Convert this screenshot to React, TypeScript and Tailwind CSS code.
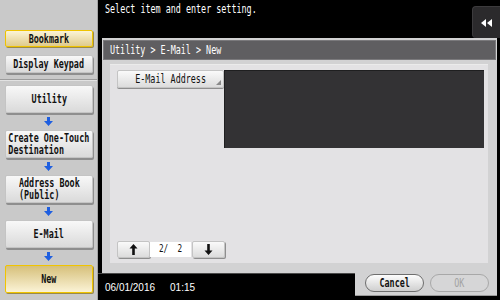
import React from "react";

const mono = "font-['DejaVu_Sans_Mono','Liberation_Mono',monospace]";

function L({ children, className = "" }: { children: React.ReactNode; className?: string }) {
  return <span className={`inline-block scale-x-[0.7] whitespace-pre ${className}`}>{children}</span>;
}

function Arrow() {
  return (
    <div className="h-[17px] flex items-center justify-center">
      <svg width="9" height="9" viewBox="0 0 9 9">
        <path d="M3 0h3v4h3L4.5 9 0 4h3z" fill="#1f5fe0" />
      </svg>
    </div>
  );
}

function SideBtn({ children, yellow = false, pressed = false, h = "h-[28px]" }: { children: React.ReactNode; yellow?: boolean; pressed?: boolean; h?: string }) {
  const base = `${h} w-[88px] rounded-[2px] flex items-center justify-center text-[12px] leading-[12px] font-bold text-[#111]`;
  const style = yellow
    ? pressed
      ? "border border-[#f0c400] bg-linear-to-b from-[#d6c07a] to-[#fbf3d6] shadow-[1px_1px_0_#9a8a4a]"
      : "border border-[#efc300] bg-linear-to-b from-[#fbf4d6] to-[#dfcb8c] shadow-[1px_1px_0_#9a8a4a]"
    : "border border-[#c4c4c4] bg-linear-to-b from-[#f8f8f8] to-[#dadada] shadow-[1px_2px_0_#8e8e8e]";
  return <div className={`${base} ${style}`}>{children}</div>;
}

export default function App() {
  return (
    <div className={`w-[500px] h-[300px] flex bg-black overflow-hidden ${mono}`}>
      {/* Sidebar */}
      <div className="w-[98px] h-full bg-[#c9c9c9] border-r border-[#a4a4a4] flex flex-col">
        <div className="pt-[30px] px-[5px] flex flex-col gap-[8px] pb-[6px]">
          <SideBtn yellow h="h-[17px]"><L>Bookmark</L></SideBtn>
          <SideBtn h="h-[18px]"><L>Display Keypad</L></SideBtn>
        </div>
        <div className="border-t border-[#9c9c9c] h-0" />
        <div className="border-t border-[#e2e2e2] h-0" />
        <div className="pt-[4px] px-[5px] flex flex-col">
          <SideBtn><L>Utility</L></SideBtn>
          <Arrow />
          <SideBtn>
            <L className="text-left">{"Create One-Touch\nDestination"}</L>
          </SideBtn>
          <Arrow />
          <SideBtn>
            <L className="text-left">{"Address Book\n(Public)"}</L>
          </SideBtn>
          <Arrow />
          <SideBtn><L>E-Mail</L></SideBtn>
          <Arrow />
          <SideBtn yellow pressed><L>New</L></SideBtn>
        </div>
      </div>

      {/* Right column */}
      <div className="flex-1 h-full flex flex-col">
        <div className="h-[38px] flex items-start">
          <div className="pt-[2px] pl-[7px] text-white text-[12px] leading-[15px]">
            <L className="origin-left">Select item and enter setting.</L>
          </div>
          <div className="ml-auto mt-[6px] w-[28px] h-[32px] rounded-l-[4px] bg-[#2b2a2c] border-l border-t border-[#3c3b3d] flex items-center justify-center">
            <svg width="11" height="8" viewBox="0 0 11 8">
              <polygon points="5,0 5,8 0,4" fill="white" />
              <polygon points="11,0 11,8 6,4" fill="white" />
            </svg>
          </div>
        </div>

        <div className="flex-1 ml-[4px] mr-[3px] bg-[#d2d2d3] flex flex-col pt-[2px] px-[1px]">
          <div className="h-[20px] bg-[#5f5e61] border border-[#7a797c] flex items-center pl-[6px] text-white text-[12px]">
            <L className="origin-left">Utility &gt; E-Mail &gt; New</L>
          </div>
          <div className="flex-1 flex flex-col pt-[4px] pb-[10px] pl-[7px] pr-[8px]">
            <div className="flex-1 bg-[#e3e2e4] border-t border-[#ebebeb] flex flex-col pl-[7px] pr-[3px] pt-[5px] pb-[5px]">
              <div className="flex items-start">
                <div className="relative w-[107px] h-[18px] rounded-[2px] border border-[#c4c4c4] bg-linear-to-b from-[#fafafa] to-[#dcdcdc] shadow-[0_1px_0_#8e8e8e] flex items-center justify-center text-[12px] text-[#111]">
                  <L>E-Mail Address</L>
                  <svg className="absolute right-[2px] bottom-[2px]" width="5" height="5" viewBox="0 0 5 5">
                    <polygon points="5,0 5,5 0,5" fill="#8a8a8a" />
                  </svg>
                </div>
                <div className="w-[260px] h-[78px] bg-[#333234] border-t border-l border-[#1f1f20]" />
              </div>
              <div className="flex-1" />
              <div className="flex items-center">
                <div className="w-[33px] h-[17px] rounded-[2px] border border-[#c4c4c4] bg-linear-to-b from-[#fafafa] to-[#dcdcdc] shadow-[1px_1px_0_#8e8e8e] flex items-center justify-center">
                  <svg width="9" height="11" viewBox="0 0 9 11">
                    <path d="M3.2 11V4.5H0.5L4.5 0 8.5 4.5H5.8V11z" fill="#111" />
                  </svg>
                </div>
                <div className="w-[41px] h-[15px] bg-white flex items-center justify-center text-[11px] text-[#111]">
                  <L>{"2/  2"}</L>
                </div>
                <div className="ml-[1px] w-[33px] h-[17px] rounded-[2px] border border-[#c4c4c4] bg-linear-to-b from-[#fafafa] to-[#dcdcdc] shadow-[1px_1px_0_#8e8e8e] flex items-center justify-center">
                  <svg width="9" height="11" viewBox="0 0 9 11">
                    <path d="M3.2 0V6.5H0.5L4.5 11 8.5 6.5H5.8V0z" fill="#111" />
                  </svg>
                </div>
              </div>
            </div>
          </div>
        </div>

        <div className="h-[27px] flex">
          <div className="w-[257px] bg-black border-t border-[#4a4a4a] flex items-center gap-[15px] pl-[7px] text-white text-[10px] font-['Liberation_Sans',Arial,sans-serif]">
            <span>06/01/2016</span>
            <span>01:15</span>
          </div>
          <div className="flex-1 mr-[3px] mb-[4px] bg-[#d2d2d3] border-b border-[#9a9a9a] flex items-start pt-[1px] pl-[10px] gap-[6px]">
            <div className="w-[59px] h-[18px] rounded-full border border-[#6e6e6e] bg-linear-to-b from-[#fdfdfd] to-[#cfcfcf] flex items-center justify-center text-[12px] font-bold text-[#111]">
              <L>Cancel</L>
            </div>
            <div className="w-[59px] h-[18px] rounded-full border border-[#a8a8a8] bg-[#d6d6d7] flex items-center justify-center text-[12px] text-[#a3a3a3]">
              <L>OK</L>
            </div>
          </div>
        </div>
      </div>
    </div>
  );
}
